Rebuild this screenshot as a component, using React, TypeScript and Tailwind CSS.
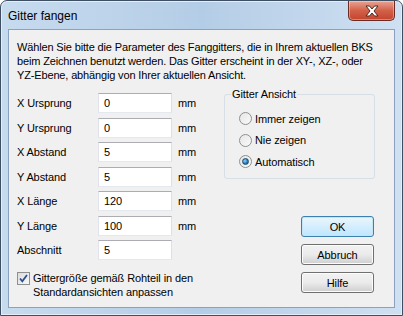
import React from 'react'

const font = { fontFamily: '"Liberation Sans", "Noto Sans", sans-serif' }

const fields = [
  { label: 'X Ursprung', value: '0', unit: true },
  { label: 'Y Ursprung', value: '0', unit: true },
  { label: 'X Abstand', value: '5', unit: true },
  { label: 'Y Abstand', value: '5', unit: true },
  { label: 'X Länge', value: '120', unit: true },
  { label: 'Y Länge', value: '100', unit: true },
  { label: 'Abschnitt', value: '5', unit: false },
]

const options = [
  { label: 'Immer zeigen', checked: false },
  { label: 'Nie zeigen', checked: false },
  { label: 'Automatisch', checked: true },
]

function CloseButton() {
  return (
    <div className="flex h-[20px] w-[47px] items-center justify-center rounded-b-[5px] border border-t-0 border-[#6b2a22] bg-gradient-to-b from-[#e8a393] via-[#d2614a] to-[#c4432b] shadow-[inset_0_0_0_1px_rgba(255,255,255,0.35)]">
      <svg width="16" height="12" viewBox="0 0 16 12">
        <path
          d="M2 1h3.5L8 4l2.5-3H14l-4 5 4 5h-3.5L8 8l-2.5 3H2l4-5z"
          fill="#fff"
          stroke="#4a2a24"
          strokeWidth="1"
          strokeLinejoin="round"
        />
      </svg>
    </div>
  )
}

function Radio({ checked }: { checked: boolean }) {
  return (
    <span className="flex h-[13px] w-[13px] items-center justify-center rounded-full border border-[#8e8f8f] bg-gradient-to-br from-[#e6e6e6] to-[#fafafa]">
      {checked && (
        <span className="h-[7px] w-[7px] rounded-full border border-[#1d4a6e] bg-[radial-gradient(circle_at_35%_35%,#8fd4f5,#1f7bbf_60%,#0e4c84)]" />
      )}
    </span>
  )
}

function Button({ label, primary }: { label: string; primary?: boolean }) {
  return (
    <div
      className={
        primary
          ? 'flex h-[21px] w-[73px] items-center justify-center rounded-[3px] border border-[#3c7fb1] bg-gradient-to-b from-[#eaf6fd] to-[#bee6fd] text-black shadow-[inset_0_0_0_1px_#c4e5f6]'
          : 'flex h-[21px] w-[73px] items-center justify-center rounded-[3px] border border-[#707070] bg-gradient-to-b from-[#f2f2f2] via-[#ebebeb] to-[#cfcfcf] text-black shadow-[inset_0_0_0_1px_#fcfcfc]'
      }
    >
      {label}
    </div>
  )
}

export default function App() {
  return (
    <div style={font} className="h-[316px] w-[403px] bg-white text-[11px] tracking-[-0.1px]">
      <div className="flex h-[316px] w-[403px] flex-col rounded-t-[7px] border border-[#3f4f63] bg-gradient-to-r from-[#c7dbef] via-[#b4cde6] to-[#cfe0f2] px-[7px] pb-[7px] shadow-[inset_0_0_0_1px_#e4eef9]">
        <div className="flex h-[28px] items-start justify-between">
          <span className="pt-[6px] text-[12px] tracking-normal text-black">Gitter fangen</span>
          <CloseButton />
        </div>
        <div className="flex-1 border border-[#8ba1bd] bg-[#f0f0f0] pl-[8px] pr-[19px] pt-[10px] leading-[14px] text-black">
          <p className="whitespace-nowrap tracking-[-0.15px]">
            Wählen Sie bitte die Parameter des Fanggitters, die in Ihrem aktuellen BKS
            <br />
            beim Zeichnen benutzt werden. Das Gitter erscheint in der XY-, XZ-, oder
            <br />
            YZ-Ebene, abhängig von Ihrer aktuellen Ansicht.
          </p>
          <div className="mt-[11px] flex justify-between">
            <div className="flex flex-col">
              <div className="flex flex-col gap-[4.5px]">
                {fields.map((f) => (
                  <div key={f.label} className="flex h-[20px] items-center">
                    <span className="w-[81px]">{f.label}</span>
                    <div className="flex h-[20px] w-[74px] items-center border border-[#abadb3] border-b-[#e3e9ef] border-l-[#e2e3ea] border-r-[#dbdfe6] bg-white pl-[5px]">
                      {f.value}
                    </div>
                    {f.unit && <span className="ml-[6px]">mm</span>}
                  </div>
                ))}
              </div>
              <div className="mt-[11px] flex gap-[3px]">
                <span className="mt-[1px] flex h-[13px] w-[13px] items-center justify-center border border-[#8e8f8f] bg-gradient-to-br from-[#dcdcdc] to-[#f8f8f8]">
                  <svg width="9" height="9" viewBox="0 0 9 9">
                    <path d="M1 4.5l2.3 2.8L8 1" fill="none" stroke="#2c4f8f" strokeWidth="1.8" />
                  </svg>
                </span>
                <span className="whitespace-nowrap leading-[14px]">
                  Gittergröße gemäß Rohteil in den
                  <br />
                  Standardansichten anpassen
                </span>
              </div>
            </div>
            <div className="flex w-[151px] flex-col items-end">
              <fieldset className="-mt-[6px] h-[92px] w-[151px] rounded-[3px] border border-[#d5dfe5] px-[14px] pt-0">
                <legend className="-ml-[8px] px-[1px]">Gitter Ansicht</legend>
                <div className="mt-[11px] flex flex-col gap-[8.5px]">
                  {options.map((o) => (
                    <label key={o.label} className="flex h-[13px] items-center gap-[3px]">
                      <Radio checked={o.checked} />
                      {o.label}
                    </label>
                  ))}
                </div>
              </fieldset>
              <div className="mr-[1px] mt-[37px] flex flex-col gap-[7px]">
                <Button label="OK" primary />
                <Button label="Abbruch" />
                <Button label="Hilfe" />
              </div>
            </div>
          </div>
        </div>
      </div>
    </div>
  )
}
